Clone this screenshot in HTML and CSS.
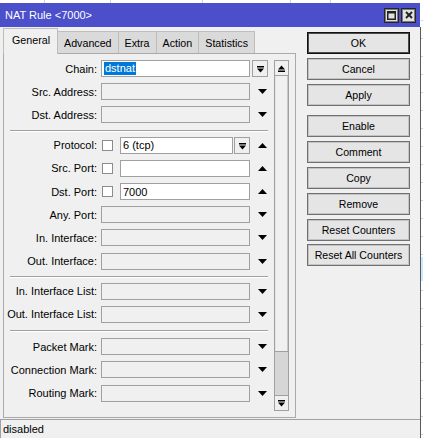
FILE: index.html
```html
<!DOCTYPE html>
<html>
<head>
<meta charset="utf-8">
<title>NAT Rule</title>
<link rel="stylesheet" href="styles.css">
</head>
<body>
<div class="screen">
  <div class="topstrip"></div>
  <div class="stage">
    <div class="win">
      <div class="titlebar">
        <span class="title">NAT Rule &lt;7000&gt;</span>
        <div class="wctl">
          <span class="wbtn"><svg width="9" height="9" viewBox="0 0 9 9"><rect x="0.75" y="0.75" width="7.5" height="7.5" fill="none" stroke="#222" stroke-width="1.5"/><rect x="0" y="0" width="9" height="2.5" fill="#222"/></svg></span>
          <span class="wbtn"><svg width="8" height="8" viewBox="0 0 8 8"><path d="M1 1L7 7M7 1L1 7" stroke="#222" stroke-width="1.9" fill="none"/></svg></span>
        </div>
      </div>
      <div class="winbody">
        <div class="main">
          <div class="leftcol">
            <div class="tabs">
              <span class="tab active">General</span>
              <span class="tab">Advanced</span>
              <span class="tab">Extra</span>
              <span class="tab">Action</span>
              <span class="tab">Statistics</span>
            </div>
            <div class="panel">
              <div class="form">
                <div class="row">
                  <span class="lbl">Chain:</span>
                  <div class="field"><div class="inp white full"><span class="sel">dstnat</span></div></div>
                  <div class="tail"><span class="ddbtn"><svg width="7" height="7" viewBox="0 0 7 7"><rect x="0" y="0" width="7" height="1.5"/><path d="M0 2.5H7L3.5 6.5Z"/></svg></span></div>
                </div>
                <div class="row">
                  <span class="lbl">Src. Address:</span>
                  <div class="field"><div class="inp full"></div></div>
                  <div class="tail"><svg class="arrow" width="9" height="5" viewBox="0 0 9 5"><path d="M0 0H9L4.5 5Z"/></svg></div>
                </div>
                <div class="row">
                  <span class="lbl">Dst. Address:</span>
                  <div class="field"><div class="inp full"></div></div>
                  <div class="tail"><svg class="arrow" width="9" height="5" viewBox="0 0 9 5"><path d="M0 0H9L4.5 5Z"/></svg></div>
                </div>
                <div class="sep"></div>
                <div class="row">
                  <span class="lbl">Protocol:</span>
                  <div class="field"><span class="cb"></span><div class="inp white full">6 (tcp)</div><span class="ddbtn inner"><svg width="7" height="7" viewBox="0 0 7 7"><rect x="0" y="0" width="7" height="1.5"/><path d="M0 2.5H7L3.5 6.5Z"/></svg></span></div>
                  <div class="tail"><svg class="arrow" width="9" height="5" viewBox="0 0 9 5"><path d="M0 5H9L4.5 0Z"/></svg></div>
                </div>
                <div class="row">
                  <span class="lbl">Src. Port:</span>
                  <div class="field"><span class="cb"></span><div class="inp white full"></div></div>
                  <div class="tail"><svg class="arrow" width="9" height="5" viewBox="0 0 9 5"><path d="M0 5H9L4.5 0Z"/></svg></div>
                </div>
                <div class="row">
                  <span class="lbl">Dst. Port:</span>
                  <div class="field"><span class="cb"></span><div class="inp white full">7000</div></div>
                  <div class="tail"><svg class="arrow" width="9" height="5" viewBox="0 0 9 5"><path d="M0 5H9L4.5 0Z"/></svg></div>
                </div>
                <div class="row">
                  <span class="lbl">Any. Port:</span>
                  <div class="field"><div class="inp full"></div></div>
                  <div class="tail"><svg class="arrow" width="9" height="5" viewBox="0 0 9 5"><path d="M0 0H9L4.5 5Z"/></svg></div>
                </div>
                <div class="row">
                  <span class="lbl">In. Interface:</span>
                  <div class="field"><div class="inp full"></div></div>
                  <div class="tail"><svg class="arrow" width="9" height="5" viewBox="0 0 9 5"><path d="M0 0H9L4.5 5Z"/></svg></div>
                </div>
                <div class="row">
                  <span class="lbl">Out. Interface:</span>
                  <div class="field"><div class="inp full"></div></div>
                  <div class="tail"><svg class="arrow" width="9" height="5" viewBox="0 0 9 5"><path d="M0 0H9L4.5 5Z"/></svg></div>
                </div>
                <div class="sep"></div>
                <div class="row">
                  <span class="lbl">In. Interface List:</span>
                  <div class="field"><div class="inp full"></div></div>
                  <div class="tail"><svg class="arrow" width="9" height="5" viewBox="0 0 9 5"><path d="M0 0H9L4.5 5Z"/></svg></div>
                </div>
                <div class="row">
                  <span class="lbl">Out. Interface List:</span>
                  <div class="field"><div class="inp full"></div></div>
                  <div class="tail"><svg class="arrow" width="9" height="5" viewBox="0 0 9 5"><path d="M0 0H9L4.5 5Z"/></svg></div>
                </div>
                <div class="sep wide"></div>
                <div class="row">
                  <span class="lbl">Packet Mark:</span>
                  <div class="field"><div class="inp full"></div></div>
                  <div class="tail"><svg class="arrow" width="9" height="5" viewBox="0 0 9 5"><path d="M0 0H9L4.5 5Z"/></svg></div>
                </div>
                <div class="row">
                  <span class="lbl">Connection Mark:</span>
                  <div class="field"><div class="inp full"></div></div>
                  <div class="tail"><svg class="arrow" width="9" height="5" viewBox="0 0 9 5"><path d="M0 0H9L4.5 5Z"/></svg></div>
                </div>
                <div class="row">
                  <span class="lbl">Routing Mark:</span>
                  <div class="field"><div class="inp full"></div></div>
                  <div class="tail"><svg class="arrow" width="9" height="5" viewBox="0 0 9 5"><path d="M0 0H9L4.5 5Z"/></svg></div>
                </div>
              </div>
              <div class="scroll">
                <span class="sbtn"><svg width="7" height="7" viewBox="0 0 7 7"><path d="M0 4.5H7L3.5 0.5Z"/><rect x="0" y="5.5" width="7" height="1.5"/></svg></span>
                <div class="track"><div class="thumb"></div></div>
                <span class="sbtn"><svg width="7" height="7" viewBox="0 0 7 7"><rect x="0" y="0" width="7" height="1.5"/><path d="M0 2.5H7L3.5 6.5Z"/></svg></span>
              </div>
            </div>
          </div>
          <div class="btns">
            <span class="btn default">OK</span>
            <span class="btn">Cancel</span>
            <span class="btn">Apply</span>
            <span class="btn spaced">Enable</span>
            <span class="btn">Comment</span>
            <span class="btn">Copy</span>
            <span class="btn">Remove</span>
            <span class="btn">Reset Counters</span>
            <span class="btn">Reset All Counters</span>
          </div>
        </div>
        <div class="status"><span>disabled</span></div>
      </div>
    </div>
    <div class="rstrip"></div>
  </div>
</div>
</body>
</html>
```
FILE: styles.css
```css
* { box-sizing: border-box; }
html, body { margin: 0; padding: 0; }
body {
  width: 423px;
  height: 438px;
  overflow: hidden;
  background: #fff;
  font-family: "Liberation Sans", Arial, sans-serif;
  font-size: 11px;
  color: #000;
}
.screen { display: flex; flex-direction: column; width: 423px; height: 438px; }
.topstrip {
  height: 3px;
  flex: none;
  background-color: #fff;
  background-image:
    linear-gradient(#cfcfcf, #cfcfcf),
    linear-gradient(#cfcfcf, #cfcfcf),
    linear-gradient(#cfcfcf, #cfcfcf),
    linear-gradient(#cfcfcf, #cfcfcf),
    linear-gradient(#cfcfcf, #cfcfcf);
  background-size: 1px 3px;
  background-repeat: no-repeat;
  background-position: 44px 0, 110px 0, 202px 0, 290px 0, 330px 0;
}
.stage { display: flex; flex: 1; min-height: 0; }
.win { width: 421px; flex: none; display: flex; flex-direction: column; }
.titlebar {
  width: 420px;
  height: 24px;
  flex: none;
  background: #4b4fc9;
  color: #fff;
  display: flex;
  align-items: center;
  justify-content: space-between;
  padding-left: 5px;
  padding-right: 4px;
  font-size: 11px;
}
.wctl { display: flex; gap: 2px; }
.wbtn {
  width: 15px;
  height: 15px;
  background: #e2e2e2;
  border: 1px solid #262626;
  box-shadow: inset 0 0 0 1px #7a7a7a;
  display: flex;
  align-items: center;
  justify-content: center;
}
.winbody {
  flex: 1;
  background: #f0f0f0;
  border-right: 1px solid #5a5a5a;
  display: flex;
  flex-direction: column;
}
.main { display: flex; height: 391px; flex: none; }
.leftcol { margin-left: 3px; padding-top: 1px; width: 293px; display: flex; flex-direction: column; }
.tabs { height: 25px; display: flex; align-items: flex-end; flex: none; }
.tab {
  height: 22px;
  padding: 0 6px;
  background: #dadada;
  border: 1px solid #bdbdbd;
  border-bottom: none;
  border-left: none;
  display: flex;
  align-items: center;
  font-size: 10.7px;
}
.tab.active {
  height: 26px;
  margin-bottom: -1px;
  background: #f0f0f0;
  border-left: 1px solid #bdbdbd;
  padding: 0 7px 3px 8px;
  position: relative;
  z-index: 1;
}
.panel {
  height: 365px;
  border: 1px solid #aaaaaa;
  display: flex;
  padding-right: 6px;
}
.form { width: 270px; padding-top: 3px; }
.row { height: 23.2px; display: flex; align-items: center; }
.lbl { width: 93px; margin-right: 4px; text-align: right; white-space: nowrap; }
.field { width: 149px; display: flex; align-items: center; }
.inp {
  height: 17px;
  border: 1px solid #a0a0a0;
  background: #f0f0f0;
  padding-left: 2px;
  display: flex;
  align-items: center;
  white-space: nowrap;
}
.inp.white { background: #fff; }
.inp.full { flex: 1; min-width: 0; }
.sel { background: #0078d7; color: #fff; line-height: 13px; padding: 0 1px 0 1px; }
.ddbtn {
  width: 16px;
  height: 17px;
  flex: none;
  border: 1px solid #a0a0a0;
  background: #f0f0f0;
  display: flex;
  align-items: center;
  justify-content: center;
  padding-top: 2px;
}
.ddbtn.inner { margin-left: 1px; }
.cb {
  width: 11px;
  height: 11px;
  flex: none;
  margin-left: 1px;
  margin-right: 7px;
  border: 1px solid #8c8c8c;
  background: #fff;
}
.tail { width: 16px; margin-left: 2px; display: flex; align-items: center; }
.arrow { display: block; margin-left: 6px; }
.sep { height: 7px; display: flex; align-items: center; padding-left: 6px; }
.sep.wide { height: 9px; }
.sep::after {
  content: "";
  width: 258px;
  height: 1px;
  background: #a0a0a0;
  box-shadow: 0 1px 0 #fff;
}
.scroll { width: 15px; flex: none; margin: 6px 0; display: flex; flex-direction: column; }
.sbtn {
  height: 16px;
  flex: none;
  border: 1px solid #a0a0a0;
  background: #f0f0f0;
  display: flex;
  align-items: center;
  justify-content: center;
}
.track {
  flex: 1;
  border-left: 1px solid #a0a0a0;
  border-right: 1px solid #a0a0a0;
  background: #d6d6d6;
}
.thumb { height: 276px; background: #f0f0f0; border-bottom: 1px solid #a0a0a0; box-shadow: inset 1px 0 0 #e4e4e4, inset -1px 0 0 #c8c8c8; }
.btns {
  margin-left: 11px;
  padding-top: 5px;
  width: 103px;
  display: flex;
  flex-direction: column;
  gap: 3.8px;
}
.btn {
  height: 22px;
  flex: none;
  border: 1px solid #707070;
  box-shadow: inset 0 0 0 1px #c4c4c4;
  background: #e5e5e5;
  display: flex;
  align-items: center;
  justify-content: center;
  font-size: 10.6px;
  white-space: nowrap;
}
.btn.default { border-color: #111; box-shadow: inset 0 0 0 1px #4a4a4a; }
.btn.spaced { margin-top: 6px; }
.status {
  flex: 1;
  margin-top: 1px;
  border-top: 1px solid #a0a0a0;
  border-left: 1px solid #a0a0a0;
  padding-left: 2px;
  padding-top: 3px;
  font-size: 11px;
}
.rstrip {
  flex: 1;
  background-color: #fff;
  background-image:
    linear-gradient(#cce8ff, #cce8ff),
    repeating-linear-gradient(to bottom, transparent 0, transparent 17px, #d0d0d0 17px, #d0d0d0 18px);
  background-size: 100% 24px, 100% 100%;
  background-position: 0 254px, 0 0;
  background-repeat: no-repeat, repeat;
}
```
